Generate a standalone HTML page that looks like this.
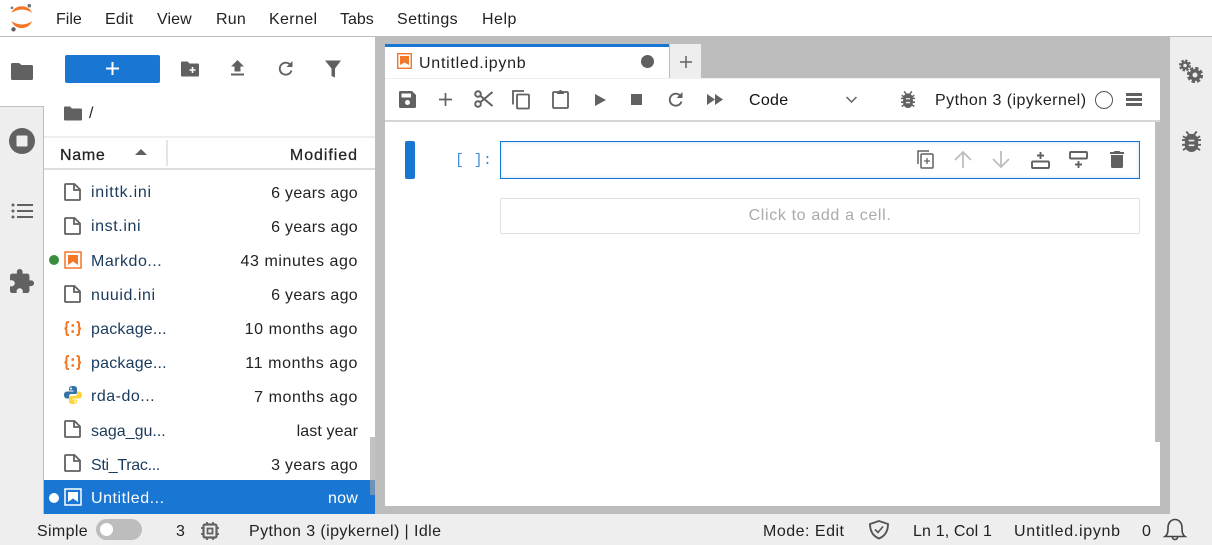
<!DOCTYPE html>
<html><head><meta charset="utf-8"><style>
html,body{margin:0;padding:0}
body{width:1212px;height:545px;position:relative;overflow:hidden;background:#eee;font-family:"Liberation Sans",sans-serif;font-size:16px;color:#222}
.a{position:absolute}
.t{position:absolute;white-space:nowrap;line-height:20px;height:20px}
.r{position:absolute;white-space:nowrap;line-height:20px;height:20px;text-align:right;right:854px;letter-spacing:.58px}
.n{color:#1a3a5c}
svg{position:absolute;overflow:visible}
.g{fill:#616161}
.s{fill:none;stroke:#616161}
</style></head><body>
<div class="a" style="left:0;top:0;width:1212px;height:36px;background:#fff"></div>
<div class="a" style="left:0;top:36px;width:1212px;height:1px;background:#bdbdbd"></div>
<svg style="left:0;top:0" width="44" height="36" viewBox="0 0 44 36"><path d="M11.500 13C14.500 4 29 4 32 13C27 8.500 17 8.500 11.500 13Z" fill="#f37726"/><path d="M11.500 21C14.500 30.500 29 30.500 32 21C27 25.500 17 25.500 11.500 21Z" fill="#f37726"/><circle cx="29.300" cy="5.700" r="1.800" fill="#757575"/><circle cx="12" cy="7.800" r="1.300" fill="#757575"/><circle cx="13.500" cy="29.300" r="2.200" fill="#616161"/></svg>
<div class="t" style="left:56px;top:10px">File</div>
<div class="t" style="left:105px;top:10px;letter-spacing:.2px">Edit</div>
<div class="t" style="left:157px;top:10px;letter-spacing:.1px">View</div>
<div class="t" style="left:216px;top:10px;letter-spacing:.2px">Run</div>
<div class="t" style="left:269px;top:10px;letter-spacing:.35px">Kernel</div>
<div class="t" style="left:340px;top:10px">Tabs</div>
<div class="t" style="left:397px;top:10px;letter-spacing:.4px">Settings</div>
<div class="t" style="left:482px;top:10px;letter-spacing:.5px">Help</div>

<div class="a" style="left:0;top:37px;width:44px;height:69px;background:#fff"></div>
<div class="a" style="left:43px;top:106px;width:1px;height:408px;background:#bdbdbd"></div>
<div class="a" style="left:0;top:106px;width:43px;height:1px;background:#bdbdbd"></div>
<svg style="left:11px;top:62px" width="22" height="19"><path class="g" d="M0 2.500Q0 1 1.500 1H8L10.500 3H20.500Q22 3 22 4.500V16.500Q22 18 20.500 18H1.500Q0 18 0 16.500Z"/></svg>
<svg style="left:9px;top:128px" width="26" height="26"><circle cx="13" cy="13" r="13" class="g"/><rect x="7.500" y="7.500" width="11" height="11" rx="1" fill="#eee"/></svg>
<svg style="left:11px;top:203px" width="22" height="16"><g fill="#616161"><circle cx="2" cy="2" r="1.500"/><circle cx="2" cy="8" r="1.500"/><circle cx="2" cy="14" r="1.500"/><rect x="6" y="1" width="16" height="2"/><rect x="6" y="7" width="16" height="2"/><rect x="6" y="13" width="16" height="2"/></g></svg>
<svg style="left:10px;top:269px" width="24" height="24" viewBox="2 1 21 21"><path class="g" d="M20.500 11H19V7c0-1.100-.9-2-2-2h-4V3.500C13 2.120 11.880 1 10.500 1S8 2.120 8 3.500V5H4c-1.100 0-1.990.9-1.990 2v3.800H3.500c1.490 0 2.700 1.210 2.700 2.700s-1.210 2.700-2.700 2.700H2V20c0 1.100.9 2 2 2h3.800v-1.500c0-1.490 1.210-2.700 2.700-2.700 1.490 0 2.700 1.210 2.700 2.700V22H17c1.100 0 2-.9 2-2v-4h1.500c1.380 0 2.500-1.120 2.500-2.500S21.880 11 20.500 11z"/></svg>

<div class="a" style="left:44px;top:37px;width:331px;height:477px;background:#fff"></div>
<div class="a" style="left:65px;top:55px;width:95px;height:28px;background:#1976d2;border-radius:2px"></div>
<svg style="left:106px;top:62px" width="13" height="13"><path d="M6.500 0V13M0 6.500H13" stroke="#fff" stroke-width="2"/></svg>
<svg style="left:181px;top:61px" width="18" height="16"><path class="g" d="M0 1.500Q0 .5 1 .5H6.500L8.500 2.500H17Q18 2.500 18 3.500V14.500Q18 15.500 17 15.500H1Q0 15.500 0 14.500Z"/><path d="M11.500 6V12M8.500 9H14.500" stroke="#fff" stroke-width="1.600"/></svg>
<svg style="left:231px;top:60px" width="13" height="16"><path class="g" d="M6.500 0L13 6.500H9.500V11.500H3.500V6.500H0ZM0 13.500H13V15.500H0Z"/></svg>
<svg style="left:277px;top:60px" width="17" height="17" viewBox="0 0 17 17"><path d="M13.500 5A6 6 0 1 0 14.500 10.500" class="s" stroke-width="1.900"/><path class="g" d="M15.500 1V7H9.500Z"/></svg>
<svg style="left:325px;top:60px" width="16" height="18"><path class="g" d="M0 .5H16L10 8.500V17.500L6.500 16V8.500Z"/></svg>
<svg style="left:64px;top:106px" width="18" height="15"><path class="g" d="M0 1.500Q0 .5 1 .5H6L8 2.500H17Q18 2.500 18 3.500V13.500Q18 14.500 17 14.500H1Q0 14.500 0 13.500Z"/></svg>
<div class="t" style="left:89px;top:104px">/</div>
<div class="a" style="left:44px;top:136px;width:331px;height:2px;background:#eee"></div>
<div class="a" style="left:44px;top:168px;width:331px;height:2px;background:#ddd"></div>
<div class="a" style="left:166px;top:140px;width:2px;height:26px;background:#e5e5e5"></div>
<div class="t" style="left:60px;top:146px;letter-spacing:.7px;-webkit-text-stroke:.25px #222">Name</div>
<svg style="left:135px;top:149px" width="12" height="6"><path class="g" d="M0 6L6 0L12 6Z"/></svg>
<div class="r" style="top:146px;letter-spacing:.95px;-webkit-text-stroke:.25px #222">Modified</div>

<svg width="0" height="0"><defs>
<g id="f"><path d="M1 1.800Q1 1 1.800 1H10.500L16 6.500V16.200Q16 17 15.200 17H1.800Q1 17 1 16.200Z" fill="none" stroke="#616161" stroke-width="1.800"/><path d="M10 1V7H16" fill="none" stroke="#616161" stroke-width="1.800"/></g>
<g id="j" fill="none" stroke="#f37726" stroke-width="2"><path d="M5 1H4Q2.500 1 2.500 3V5.500Q2.500 7.500 .5 7.500Q2.500 7.500 2.500 9.500V12Q2.500 14 4 14H5"/><path d="M12.500 1H13.500Q15 1 15 3V5.500Q15 7.500 17 7.500Q15 7.500 15 9.500V12Q15 14 13.500 14H12.500"/><path d="M7.500 4.500H10M7.500 10.500H10" stroke-width="2.600"/></g>
<g id="b"><path d="M4.500 .5L7.500 4M15.500 .5L12.500 4M0 9.500H20M0 14.500H20M1 20L5 17.500M19 20L15 17.500M1 5.500L5 8M19 5.500L15 8" fill="none" stroke="#616161" stroke-width="2"/><rect x="3" y="3" width="14" height="19" rx="7" class="g"/><path d="M7 10H13M7 15H13" stroke="#eee" stroke-width="1.700"/></g>
</defs></svg>

<svg style="left:64px;top:183px" width="17" height="18"><use href="#f"/></svg>
<div class="t n" style="left:91px;top:183px;letter-spacing:.75px">inittk.ini</div><div class="r" style="top:184px;letter-spacing:.3px">6 years ago</div>
<svg style="left:64px;top:217px" width="17" height="18"><use href="#f"/></svg>
<div class="t n" style="left:91px;top:217px;letter-spacing:.6px">inst.ini</div><div class="r" style="top:218px;letter-spacing:.3px">6 years ago</div>
<div class="a" style="left:49px;top:255px;width:10px;height:10px;border-radius:50%;background:#388e3c"></div>
<svg style="left:64px;top:251px" width="18" height="18"><rect x="1" y="1" width="16" height="16" fill="#fff" stroke="#f37726" stroke-width="1.500"/><path d="M4 4H14V14L9 10.500L4 14Z" fill="#f37726"/></svg>
<div class="t n" style="left:91px;top:252px;letter-spacing:.5px">Markdo...</div><div class="r" style="top:252px">43 minutes ago</div>
<svg style="left:64px;top:285px" width="17" height="18"><use href="#f"/></svg>
<div class="t n" style="left:91px;top:286px;letter-spacing:.55px">nuuid.ini</div><div class="r" style="top:286px;letter-spacing:.3px">6 years ago</div>
<svg style="left:64px;top:321px" width="18" height="15"><use href="#j"/></svg>
<div class="t n" style="left:91px;top:320px;letter-spacing:.2px">package...</div><div class="r" style="top:320px">10 months ago</div>
<svg style="left:64px;top:355px" width="18" height="15"><use href="#j"/></svg>
<div class="t n" style="left:91px;top:354px;letter-spacing:.2px">package...</div><div class="r" style="top:354px;letter-spacing:.62px">11 months ago</div>
<svg style="left:64px;top:386px" width="18" height="18" viewBox="0 0 18 18"><path d="M9 0C6 0 5 1 5 3V4.500H9.500V5.500H3C1 5.500 0 7 0 9S1 12.500 3 12.500H5V10.500C5 9 6 8 7.500 8H11.500C12.500 8 13 7.500 13 6.500V3C13 1 12 0 9 0Z" fill="#3572a5"/><path d="M9 18C12 18 13 17 13 15V13.500H8.500V12.500H15C17 12.500 18 11 18 9S17 5.500 15 5.500H13V7.500C13 9 12 10 10.500 10H6.500C5.500 10 5 10.500 5 11.500V15C5 17 6 18 9 18Z" fill="#ffd43b"/><circle cx="7" cy="2.500" r="1" fill="#fff"/><circle cx="11" cy="15.500" r="1" fill="#fff"/></svg>
<div class="t n" style="left:91px;top:387px;letter-spacing:.5px">rda-do...</div><div class="r" style="top:388px">7 months ago</div>
<svg style="left:64px;top:420px" width="17" height="18"><use href="#f"/></svg>
<div class="t n" style="left:91px;top:422px">saga_gu...</div><div class="r" style="top:422px;letter-spacing:.1px">last year</div>
<svg style="left:64px;top:454px" width="17" height="18"><use href="#f"/></svg>
<div class="t n" style="left:91px;top:456px;letter-spacing:-.3px">Sti_Trac...</div><div class="r" style="top:456px;letter-spacing:.3px">3 years ago</div>
<div class="a" style="left:44px;top:480px;width:331px;height:34px;background:#1976d2"></div>
<div class="a" style="left:49px;top:493px;width:10px;height:10px;border-radius:50%;background:#fff"></div>
<svg style="left:64px;top:488px" width="18" height="18"><rect x="1" y="1" width="16" height="16" fill="none" stroke="#fff" stroke-width="1.500"/><path d="M4 4H14V14L9 10.500L4 14Z" fill="#fff"/></svg>
<div class="t" style="left:91px;top:489px;color:#fff;letter-spacing:.55px">Untitled...</div><div class="r" style="top:489px;color:#fff;letter-spacing:.2px">now</div>

<div class="a" style="left:375px;top:37px;width:795px;height:477px;background:#bdbdbd"></div>
<div class="a" style="left:370px;top:437px;width:5px;height:43px;background:#c2c2c2"></div>
<div class="a" style="left:370px;top:480px;width:5px;height:15px;background:#6f93b8"></div>
<div class="a" style="left:385px;top:44px;width:284px;height:3px;background:#1976d2"></div>
<div class="a" style="left:385px;top:47px;width:284px;height:32px;background:#fff"></div>
<div class="a" style="left:670px;top:44px;width:31px;height:34px;background:#eee"></div>
<svg style="left:680px;top:56px" width="12" height="12"><path d="M6 0V12M0 6H12" stroke="#616161" stroke-width="1.500"/></svg>
<svg style="left:397px;top:53px" width="15" height="16"><rect x=".7" y=".7" width="13.600" height="14.600" fill="#fff" stroke="#f37726" stroke-width="1.400"/><path d="M3 3H12V12L7.500 9.500L3 12Z" fill="#f37726"/></svg>
<div class="t" style="left:419px;top:54px;letter-spacing:.75px">Untitled.ipynb</div>
<div class="a" style="left:641px;top:55px;width:13px;height:13px;border-radius:50%;background:#616161"></div>

<div class="a" style="left:385px;top:79px;width:775px;height:41px;background:#fff"></div>
<div class="a" style="left:385px;top:78px;width:775px;height:1px;background:#eee"></div>
<div class="a" style="left:385px;top:120px;width:775px;height:2px;background:#d5d5d5"></div>
<svg style="left:399px;top:91px" width="17" height="17"><path class="g" d="M1.500 0H13L17 4V15.500Q17 17 15.500 17H1.500Q0 17 0 15.500V1.500Q0 0 1.500 0Z"/><rect x="2.500" y="2.500" width="9.500" height="4" fill="#fff"/><circle cx="8.500" cy="11.500" r="2.500" fill="#fff"/></svg>
<svg style="left:439px;top:93px" width="13" height="13"><path d="M6.500 0V13M0 6.500H13" stroke="#616161" stroke-width="1.700"/></svg>
<svg style="left:474px;top:90px" width="19" height="18" viewBox="0 0 19 18"><circle cx="4" cy="4" r="2.800" class="s" stroke-width="2"/><circle cx="4" cy="14" r="2.800" class="s" stroke-width="2"/><path d="M6 5.500L18.500 16M6 12.500L18.500 2" class="s" stroke-width="2"/></svg>
<svg style="left:512px;top:90px" width="18" height="19" viewBox="0 0 18 19"><path d="M1 14.500V1H12" class="s" stroke-width="1.800"/><rect x="5" y="4.500" width="12" height="14" rx="1" class="s" stroke-width="1.800"/></svg>
<svg style="left:552px;top:89px" width="17" height="20" viewBox="0 0 17 20"><rect x="1" y="3" width="15" height="16" rx="1" class="s" stroke-width="1.800"/><path class="g" d="M5 5V2.500H7A1.500 1.500 0 0 1 10 2.500H12V5Z"/></svg>
<svg style="left:595px;top:94px" width="11" height="12"><path class="g" d="M0 0L11 6L0 12Z"/></svg>
<svg style="left:631px;top:94px" width="11" height="11"><rect width="11" height="11" class="g"/></svg>
<svg style="left:667px;top:91px" width="17" height="17" viewBox="0 0 17 17"><path d="M13.500 5A6 6 0 1 0 14.500 10.500" class="s" stroke-width="1.900"/><path class="g" d="M15.500 1V7H9.500Z"/></svg>
<svg style="left:707px;top:94px" width="16" height="11"><path class="g" d="M0 0L8 5.500L0 11ZM8 0L16 5.500L8 11Z"/></svg>
<div class="t" style="left:749px;top:91px;color:#111;letter-spacing:.3px">Code</div>
<svg style="left:845px;top:96px" width="13" height="8"><path d="M1.500 1L6.500 6L11.500 1" class="s" stroke-width="1.500"/></svg>
<svg style="left:901px;top:91px" width="14" height="17" viewBox="0 0 20 22" preserveAspectRatio="none"><use href="#b"/></svg>
<div class="t" style="left:935px;top:91px;letter-spacing:.46px">Python 3 (ipykernel)</div>
<div class="a" style="left:1095px;top:91px;width:16px;height:16px;border:1.500px solid #555;border-radius:50%;box-sizing:content-box"></div>
<svg style="left:1126px;top:93px" width="16" height="13"><path class="g" d="M0 0H16V3H0ZM0 5H16V8H0ZM0 10H16V13H0Z"/></svg>

<div class="a" style="left:385px;top:122px;width:775px;height:384px;background:#fff"></div>
<div class="a" style="left:1155px;top:122px;width:5px;height:320px;background:#bdbdbd"></div>
<div class="a" style="left:405px;top:141px;width:10px;height:38px;background:#1976d2;border-radius:2px"></div>
<div class="t" style="left:455px;top:151px;font-family:'Liberation Mono',monospace;font-size:15px;color:#3f8fdc;letter-spacing:.3px">[ ]:</div>
<div class="a" style="left:500px;top:141px;width:640px;height:38px;box-sizing:border-box;border:1px solid #1976d2;box-shadow:inset 0 0 3px rgba(25,118,210,.3);background:#fff"></div>
<svg style="left:917px;top:150px" width="17" height="19" viewBox="0 0 17 19"><path d="M1 14V1H12" class="s" stroke-width="1.500"/><rect x="4" y="4" width="12" height="14" rx="1" class="s" stroke-width="1.500"/><path d="M10 8V14M7 11H13" class="s" stroke-width="1.300"/></svg>
<svg style="left:954px;top:151px" width="18" height="17" viewBox="0 0 18 17"><path d="M9 17V1M1 9L9 1L17 9" fill="none" stroke="#bdbdbd" stroke-width="1.800"/></svg>
<svg style="left:992px;top:151px" width="18" height="17" viewBox="0 0 18 17"><path d="M9 0V16M1 8L9 16L17 8" fill="none" stroke="#bdbdbd" stroke-width="1.800"/></svg>
<svg style="left:1031px;top:151px" width="19" height="18" viewBox="0 0 19 18"><rect x="1" y="10.500" width="17" height="6.500" rx="1" class="s" stroke-width="1.900"/><path d="M9.500 1V8M6 4.500H13" class="s" stroke-width="1.900"/></svg>
<svg style="left:1069px;top:151px" width="19" height="18" viewBox="0 0 19 18"><rect x="1" y="1" width="17" height="6.500" rx="1" class="s" stroke-width="1.900"/><path d="M9.500 10V17M6 13.500H13" class="s" stroke-width="1.900"/></svg>
<svg style="left:1110px;top:151px" width="14" height="17"><path class="g" d="M4.500 0H9.500L10.500 1H14V3H0V1H3.500ZM1 4H13V15.500Q13 17 11.500 17H2.500Q1 17 1 15.500Z"/></svg>
<div class="a" style="left:500px;top:198px;width:640px;height:36px;box-sizing:border-box;border:1px solid #e0e0e0;border-radius:2px;background:#fff;text-align:center;line-height:33px;color:#aaa;letter-spacing:.65px">Click to add a cell.</div>

<svg style="left:1179px;top:60px" width="24" height="24" viewBox="0 0 24 24"><circle cx="6" cy="5.500" r="3" fill="none" stroke="#616161" stroke-width="2.400"/><circle cx="6" cy="5.500" r="5" fill="none" stroke="#616161" stroke-width="2" stroke-dasharray="2.400 1.530"/><circle cx="16" cy="15" r="4.200" fill="none" stroke="#616161" stroke-width="3.400"/><circle cx="16" cy="15" r="6.800" fill="none" stroke="#616161" stroke-width="2.600" stroke-dasharray="3.400 1.940"/></svg>
<svg style="left:1182px;top:131px" width="19" height="21" viewBox="0 0 20 22" preserveAspectRatio="none"><use href="#b"/></svg>

<div class="t" style="left:37px;top:522px;letter-spacing:.35px">Simple</div>
<div class="a" style="left:96px;top:519px;width:46px;height:21px;border-radius:11px;background:#bdbdbd"></div>
<div class="a" style="left:100px;top:523px;width:13px;height:13px;border-radius:50%;background:#fff"></div>
<div class="t" style="left:176px;top:522px">3</div>
<svg style="left:201px;top:522px" width="18" height="18" viewBox="0 0 18 18"><rect x="2.500" y="2.500" width="13" height="13" rx="1.500" class="s" stroke-width="2.200"/><rect x="6.500" y="6.500" width="5" height="5" class="s" stroke-width="1.800"/><path d="M6 0V2.500M12 0V2.500M6 15.500V18M12 15.500V18M0 6H2.500M0 12H2.500M15.500 6H18M15.500 12H18" class="s" stroke-width="1.800"/></svg>
<div class="t" style="left:249px;top:522px;letter-spacing:.42px">Python 3 (ipykernel) | Idle</div>
<div class="t" style="left:763px;top:522px;letter-spacing:.5px">Mode: Edit</div>
<svg style="left:869px;top:520px" width="20" height="20" viewBox="0 0 20 20"><path d="M10 1L19 4C19 11 16 16 10 18.500C4 16 1 11 1 4Z" fill="none" stroke="#555" stroke-width="1.900"/><path d="M6 9.500L9 12.500L14 6.500" fill="none" stroke="#555" stroke-width="1.600"/></svg>
<div class="t" style="left:913px;top:522px;letter-spacing:.15px">Ln 1, Col 1</div>
<div class="t" style="left:1014px;top:522px;letter-spacing:.7px">Untitled.ipynb</div>
<div class="t" style="left:1142px;top:522px">0</div>
<svg style="left:1164px;top:518px" width="22" height="23" viewBox="0 0 22 23"><path d="M1 18.500C4 16.500 4 13 4 9.500C4 5 7 1.500 11 1.500S18 5 18 9.500C18 13 18 16.500 21 18.500Z" fill="none" stroke="#444" stroke-width="1.600"/><path d="M8.500 19A2.500 2.500 0 0 0 13.500 19" fill="none" stroke="#444" stroke-width="1.600"/></svg>
</body></html>
